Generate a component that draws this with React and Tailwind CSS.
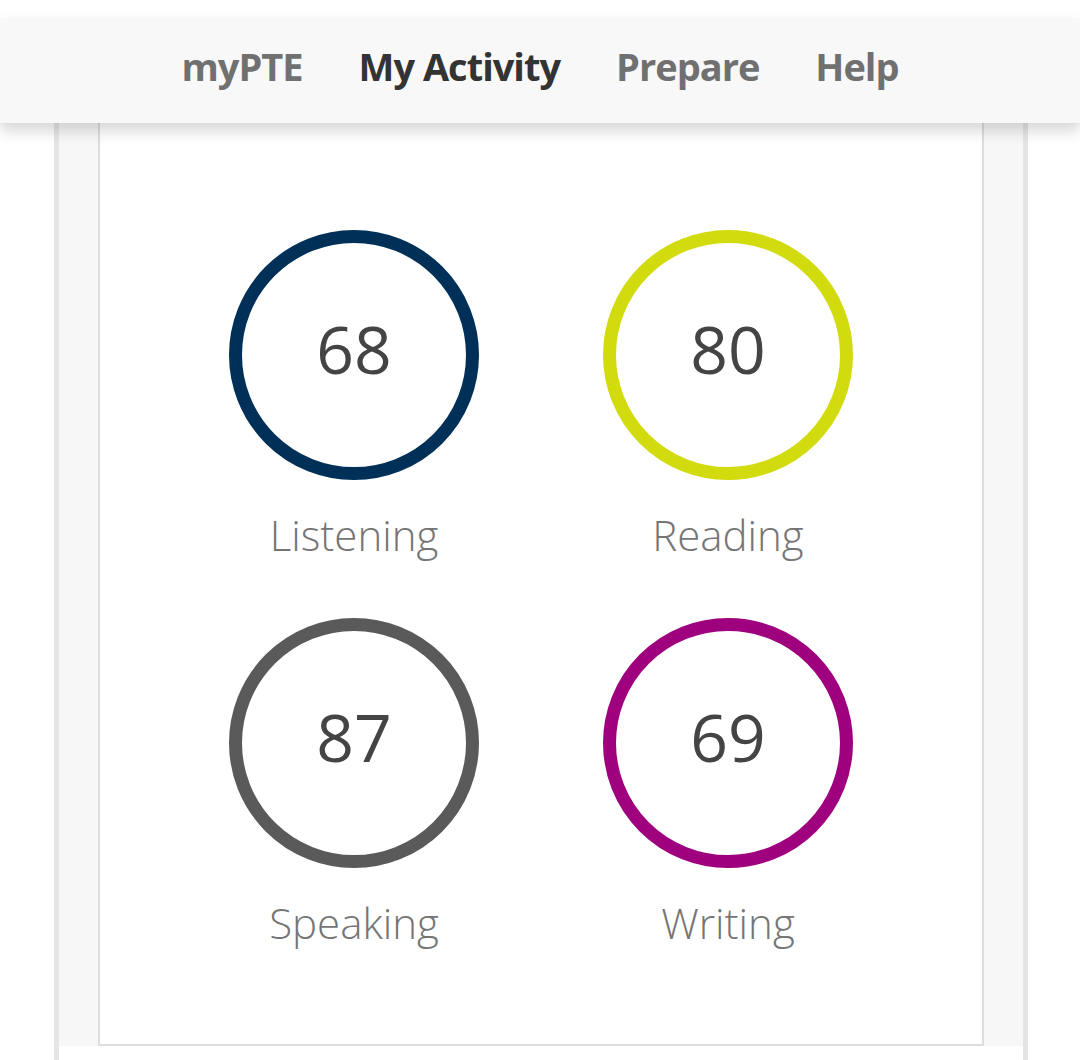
export default function App() {
  const items = [
    { score: 68, label: "Listening", color: "border-[#003057]" },
    { score: 80, label: "Reading", color: "border-[#d2db0e]" },
    { score: 87, label: "Speaking", color: "border-[#5a5a5a]" },
    { score: 69, label: "Writing", color: "border-[#9e007e]" },
  ];
  return (
    <div className="min-h-[1060px] bg-white font-['Open_Sans',sans-serif] overflow-hidden">
      <div className="h-[18px] bg-white" />
      <header className="relative z-10 h-[105px] bg-[#f8f8f8] shadow-[0_8px_14px_rgba(0,0,0,0.16)] flex items-center justify-center gap-[56px] pb-[8px] text-[38px] font-bold tracking-[-1px]">
        <span className="text-[#707070]">myPTE</span>
        <span className="text-[#333333]">My Activity</span>
        <span className="text-[#707070]">Prepare</span>
        <span className="text-[#707070]">Help</span>
      </header>
      <div className="ml-[54px] w-[974px] border-x-[5px] border-[#e5e5e5] bg-white pb-[40px]">
        <div className="bg-[#f7f7f7] px-[39px]">
          <div className="bg-white border-x-2 border-b-2 border-[#dddddd] pt-[107px] pb-[93px]">
            <div className="grid grid-cols-[250px_250px] justify-center gap-x-[124px] gap-y-[55px]">
              {items.map((it) => (
                <div key={it.label} className="flex flex-col items-center">
                  <div className={`w-[250px] h-[250px] rounded-full border-[13px] ${it.color} flex items-center justify-center pb-[14px]`}>
                    <span className="text-[66px] text-[#444444] leading-none">{it.score}</span>
                  </div>
                  <div className="mt-[26px] text-[42px] leading-[57px] font-light text-[#757575]">{it.label}</div>
                </div>
              ))}
            </div>
          </div>
        </div>
      </div>
    </div>
  );
}
